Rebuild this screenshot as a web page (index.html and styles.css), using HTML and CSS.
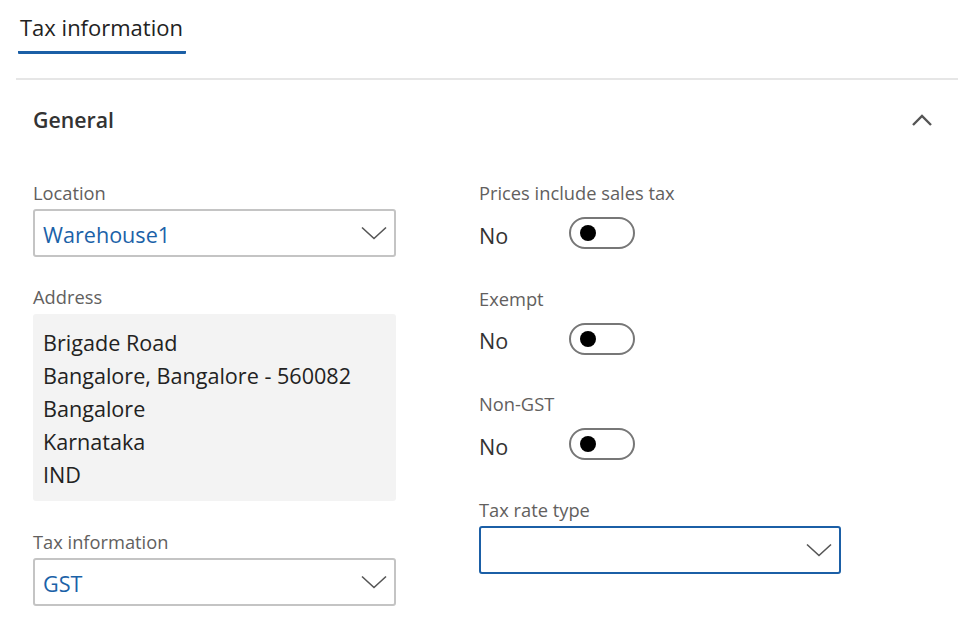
FILE: index.html
```html
<!DOCTYPE html>
<html lang="en">
<head>
<meta charset="utf-8">
<title>Tax information</title>
<link rel="stylesheet" href="styles.css">
</head>
<body>
<div class="page">
  <div class="tabs">
    <div class="tab">Tax information</div>
  </div>
  <div class="divider"></div>
  <div class="section">
    <div class="section-header">
      <span class="section-title">General</span>
      <svg class="collapse" width="22" height="14" viewBox="0 0 22 14"><path d="M2 12 L11 3 L20 12" fill="none" stroke="#555" stroke-width="2.4"/></svg>
    </div>
    <div class="columns">
      <div class="col">
        <div class="label">Location</div>
        <div class="select">
          <span class="value">Warehouse1</span>
          <svg class="chev" width="26" height="14" viewBox="0 0 26 14"><path d="M1 1.5 L13 12.5 L25 1.5" fill="none" stroke="#555" stroke-width="1.6"/></svg>
        </div>
        <div class="label gap-lg">Address</div>
        <div class="address">
          <div>Brigade Road</div>
          <div>Bangalore, Bangalore - 560082</div>
          <div>Bangalore</div>
          <div>Karnataka</div>
          <div>IND</div>
        </div>
        <div class="label gap-lg2">Tax information</div>
        <div class="select">
          <span class="value">GST</span>
          <svg class="chev" width="26" height="14" viewBox="0 0 26 14"><path d="M1 1.5 L13 12.5 L25 1.5" fill="none" stroke="#555" stroke-width="1.6"/></svg>
        </div>
      </div>
      <div class="col">
        <div class="field">
          <div class="label">Prices include sales tax</div>
          <div class="toggle-row"><span class="no">No</span><span class="toggle"><span class="knob"></span></span></div>
        </div>
        <div class="field">
          <div class="label">Exempt</div>
          <div class="toggle-row"><span class="no">No</span><span class="toggle"><span class="knob"></span></span></div>
        </div>
        <div class="field">
          <div class="label">Non-GST</div>
          <div class="toggle-row"><span class="no">No</span><span class="toggle"><span class="knob"></span></span></div>
        </div>
        <div class="label">Tax rate type</div>
        <div class="select focused">
          <span class="value"></span>
          <svg class="chev" width="26" height="14" viewBox="0 0 26 14"><path d="M1 1.5 L13 12.5 L25 1.5" fill="none" stroke="#555" stroke-width="1.6"/></svg>
        </div>
      </div>
    </div>
  </div>
</div>
</body>
</html>
```
FILE: styles.css
```css
* { box-sizing: border-box; }
html, body { margin: 0; padding: 0; background: #fff; }
body {
  font-family: "Open Sans", "Noto Sans", sans-serif;
  color: #222;
  width: 960px;
  height: 632px;
  overflow: hidden;
}
.tabs {
  padding: 12px 0 0 18px;
  display: flex;
}
.tab {
  font-size: 22px;
  line-height: 30px;
  color: #222;
  padding: 0 2px;
  height: 42px;
  border-bottom: 3px solid #1b5fa6;
  border-radius: 0 0 1px 1px;
  width: 168px;
  white-space: nowrap;
}
.divider {
  margin: 24px 2px 0 16px;
  height: 2px;
  background: #e6e6e6;
}
.section {
  padding: 0 0 0 33px;
}
.section-header {
  display: flex;
  align-items: center;
  justify-content: space-between;
  height: 80px;
  padding-right: 27px;
}
.section-title {
  font-size: 21.3px;
  font-weight: 600;
  color: #333;
  margin-top: -1px;
}
.collapse { display: block; }
.columns {
  display: grid;
  grid-template-columns: 363px 362px;
  column-gap: 83px;
  padding-top: 21px;
}
.col { display: flex; flex-direction: column; }
.label {
  font-size: 18.3px;
  line-height: 24px;
  color: #62605e;
  white-space: nowrap;
}
.select {
  margin-top: 4px;
  height: 48px;
  border: 2px solid #c4c4c4;
  border-radius: 3px;
  display: flex;
  align-items: center;
  justify-content: space-between;
  padding: 2px 7px 0 8px;
}
.select.focused { border-color: #1b5fa6; margin-top: 4px; }
.value {
  font-size: 21.6px;
  color: #1b62a8;
}
.chev { display: block; margin-top: -2px; }
.gap-lg { margin-top: 28px; }
.gap-lg2 { margin-top: 29px; }
.address {
  margin-top: 5px;
  background: #f3f3f3;
  border-radius: 3px;
  height: 187px;
  padding: 12px 10px 0 10px;
  font-size: 21.6px;
  line-height: 33px;
  color: #222;
  white-space: nowrap;
}
.field { height: 105.5px; }
.toggle-row {
  display: flex;
  align-items: center;
  margin-top: 12px;
  height: 32px;
}
.no {
  font-size: 21.6px;
  color: #333;
  width: 90px;
  padding-top: 4px;
}
.toggle {
  width: 66px;
  height: 32px;
  border: 2px solid #777;
  border-radius: 16px;
  display: flex;
  align-items: center;
  padding-left: 9px;
}
.knob {
  width: 16px;
  height: 16px;
  border-radius: 50%;
  background: #000;
}
```
